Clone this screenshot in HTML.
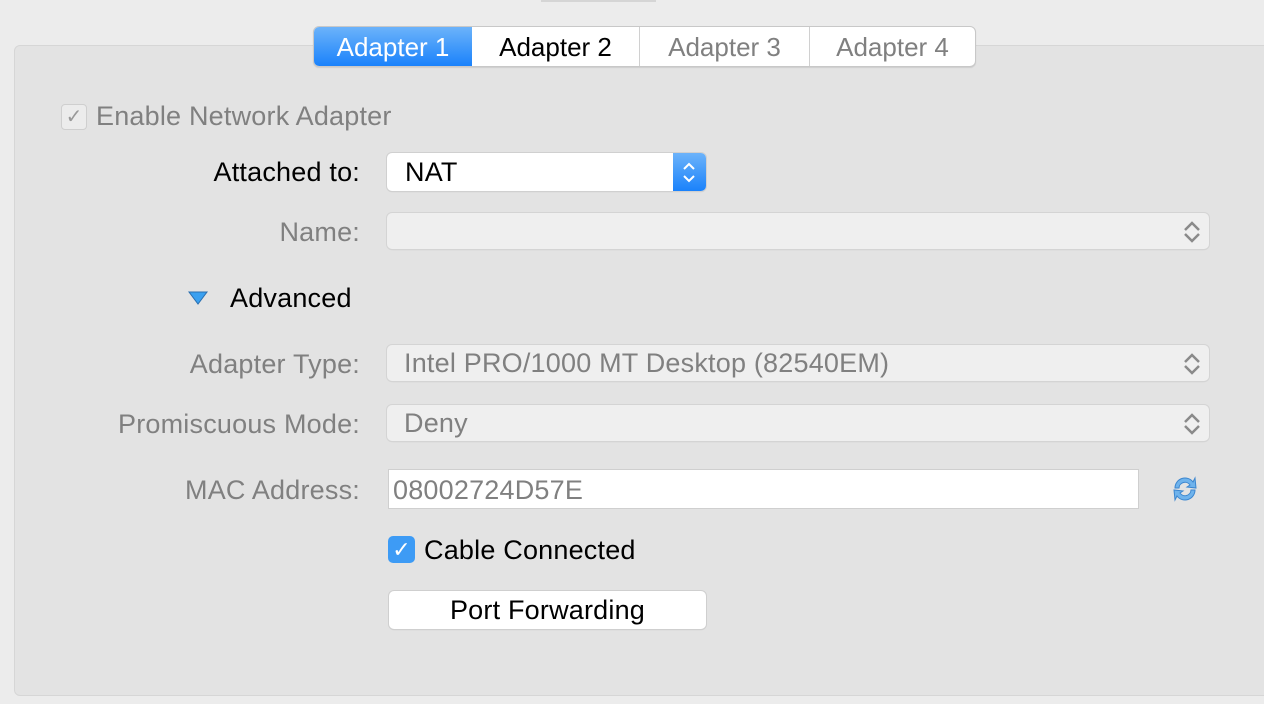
<!DOCTYPE html>
<html><head><style>
body{margin:0;width:1264px;height:704px;background:#ececec;font-family:"Liberation Sans",sans-serif;position:relative;overflow:hidden}
.a{position:absolute}
.f{font-size:27px;letter-spacing:0.2px}
.panel{left:14px;top:45px;width:1270px;height:649px;background:#e3e3e3;border:1px solid #d6d6d6;border-radius:6px}
.tabs{left:313px;top:26px;height:39px;display:flex;border:1px solid #c8c8c8;border-radius:6px;overflow:hidden;background:#fff;box-shadow:0 1px 1px rgba(0,0,0,.1)}
.tab{height:39px;line-height:40px;font-size:26px;text-align:center;border-left:1px solid #d0d0d0;color:#000}
.lbl{text-align:right;width:360px;left:0;color:#808080}
.sel{left:387px;width:822px;height:36px;background:#efefef;border-radius:5px;box-shadow:0 0 0 1px #d4d4d4,0 1px 1px rgba(0,0,0,.12);color:#808080;line-height:37px;text-indent:17px}
.ar{position:absolute;right:8px;top:8px}
</style></head><body>
<div class="a" style="left:541px;top:0;width:115px;height:2px;background:#d5d5d5"></div>
<div class="a panel"></div>
<div class="a tabs">
<div class="tab" style="width:158px;border:0;color:#fff;background:linear-gradient(#6cb3fa,#1a82fb)">Adapter 1</div>
<div class="tab" style="width:167px;border:0">Adapter 2</div>
<div class="tab" style="width:169px;color:#808080">Adapter 3</div>
<div class="tab" style="width:165px;color:#808080">Adapter 4</div>
</div>
<div class="a" style="left:61px;top:104px;width:24px;height:24px;border:1px solid #cfcfcf;border-radius:4px;background:#ececec;color:#999;font-size:20px;line-height:24px;text-align:center">✓</div>
<div class="a f" style="left:96px;top:101px;color:#808080">Enable Network Adapter</div>
<div class="a lbl f" style="top:157px;color:#000">Attached to:</div>
<div class="a" style="left:387px;top:153px;width:319px;height:38px;background:#fff;border-radius:5px;box-shadow:0 0 0 1px #d0d0d0,0 1px 1px rgba(0,0,0,.15);overflow:hidden">
<span class="f" style="position:absolute;left:18px;top:4px">NAT</span>
<div style="position:absolute;right:0;top:0;width:33px;height:38px;background:linear-gradient(#6cb3fa,#1a82fb)">
<svg width="33" height="38"><path d="M11 16l5-5 5 5M11 23l5 5 5-5" fill="none" stroke="#fff" stroke-width="2"/></svg></div></div>
<div class="a lbl f" style="top:217px">Name:</div>
<div class="a sel f" style="top:213px"><svg class="ar" width="18" height="22"><path d="M2 9l7-7 7 7M2 13l7 7 7-7" fill="none" stroke="#8a8a8a" stroke-width="2.5"/></svg></div>
<svg class="a" style="left:188px;top:291px" width="20" height="14"><path d="M1 1h18l-9 12z" fill="#3aa0f0" stroke="#2a6fb0" stroke-width="1"/></svg>
<div class="a f" style="left:230px;top:283px">Advanced</div>
<div class="a lbl f" style="top:349px">Adapter Type:</div>
<div class="a sel f" style="top:345px">Intel PRO/1000 MT Desktop (82540EM)<svg class="ar" width="18" height="22"><path d="M2 9l7-7 7 7M2 13l7 7 7-7" fill="none" stroke="#8a8a8a" stroke-width="2.5"/></svg></div>
<div class="a lbl f" style="top:409px">Promiscuous Mode:</div>
<div class="a sel f" style="top:405px">Deny<svg class="ar" width="18" height="22"><path d="M2 9l7-7 7 7M2 13l7 7 7-7" fill="none" stroke="#8a8a8a" stroke-width="2.5"/></svg></div>
<div class="a lbl f" style="top:475px">MAC Address:</div>
<div class="a f" style="left:388px;top:469px;width:749px;height:38px;background:#fff;border:1px solid #cfcfcf;color:#808080;line-height:40px;text-indent:4px">08002724D57E</div>
<svg class="a" style="left:1171px;top:474px" width="28" height="30"><path d="M4 14a10 10 0 0 1 18-6l2-4 1 10-9-1 3-2a6 6 0 0 0-11 3z" fill="#6fb3ec" stroke="#3b86cf"/><path d="M24 16a10 10 0 0 1-18 6l-2 4-1-10 9 1-3 2a6 6 0 0 0 11-3z" fill="#6fb3ec" stroke="#3b86cf"/></svg>
<div class="a" style="left:388px;top:536px;width:27px;height:27px;border-radius:5px;background:#3d9bf5;color:#fff;font-size:22px;line-height:28px;text-align:center">✓</div>
<div class="a f" style="left:424px;top:535px">Cable Connected</div>
<div class="a f" style="left:389px;top:591px;width:317px;height:38px;background:#fff;border-radius:5px;box-shadow:0 0 0 1px #cfcfcf,0 1px 1px rgba(0,0,0,.15);text-align:center;line-height:39px">Port Forwarding</div>
</body></html>
